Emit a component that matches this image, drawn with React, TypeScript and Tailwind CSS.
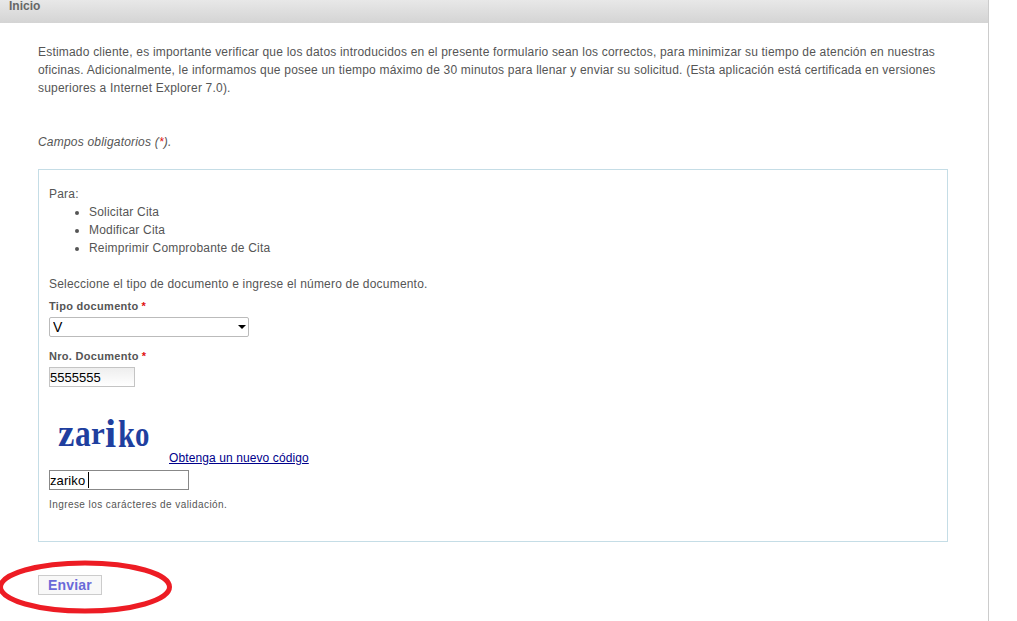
import { ChangeEvent, useState } from 'react';

function Required() {
  return <span className="text-[#e01010] ml-[3px]">*</span>;
}

function Captcha() {
  return (
    <div className="w-[120px] h-[55px] flex items-end pl-[9px] pb-[16px] text-[#1f3f9f] font-bold leading-[30px] font-['Liberation_Serif',serif]">
      <span className="text-[37px] w-[17px]">z</span>
      <span className="text-[37px] w-[16px] origin-left scale-x-[0.85]">a</span>
      <span className="text-[31px] w-[14px]">r</span>
      <span className="text-[40px] w-[13px]">i</span>
      <span className="text-[38px] w-[17px] origin-left scale-x-[0.8]">k</span>
      <span className="text-[36px] w-[15px] origin-left scale-x-[0.8]">o</span>
    </div>
  );
}

export default function App() {
  const [tipo, setTipo] = useState('V');
  const [documento, setDocumento] = useState('5555555');
  const [codigo, setCodigo] = useState('zariko');

  return (
    <div className="relative w-[1017px] h-[621px] overflow-hidden bg-white font-['Liberation_Sans',Arial,sans-serif] text-[12px] leading-[18px] tracking-[0.2px] text-[#555]">
      <div className="w-[989px] h-full border-r border-[#ccc]">
        <div className="h-[23px] px-[9px] bg-gradient-to-b from-[#e8e8e8] to-[#d4d4d4] font-bold text-[#666] leading-[13px] tracking-normal">
          Inicio
        </div>

        <div className="pl-[38px] pr-[40px] pt-[20px]">
          <p>
            Estimado cliente, es importante verificar que los datos introducidos en el presente formulario sean los correctos, para minimizar su tiempo de atención en nuestras oficinas. Adicionalmente, le informamos que posee un tiempo máximo de 30 minutos para llenar y enviar su solicitud. (Esta aplicación está certificada en versiones superiores a Internet Explorer 7.0).
          </p>

          <p className="mt-[36px] italic">
            Campos obligatorios (<span className="text-[#e01010]">*</span>).
          </p>

          <div className="mt-[18px] h-[373px] w-[910px] border border-[#c5dde6] pt-[15px] px-[10px]">
            <p>Para:</p>
            <ul className="list-disc pl-[40px]">
              <li>Solicitar Cita</li>
              <li>Modificar Cita</li>
              <li>Reimprimir Comprobante de Cita</li>
            </ul>

            <p className="mt-[18px]">Seleccione el tipo de documento e ingrese el número de documento.</p>

            <form onSubmit={(e) => e.preventDefault()}>
              <label htmlFor="tipo" className="block mt-[4px] text-[11px] font-bold tracking-[0.3px]">
                Tipo documento
                <Required />
              </label>
              <div className="relative mt-[2px] w-[200px]">
                <select
                  id="tipo"
                  value={tipo}
                  onChange={(e: ChangeEvent<HTMLSelectElement>) => setTipo(e.target.value)}
                  className="block w-[200px] h-[20px] pl-[3px] appearance-none bg-white border border-[#bbb] rounded-[2px] text-[14px] tracking-normal text-black"
                >
                  <option>V</option>
                  <option>E</option>
                  <option>P</option>
                </select>
                <span className="absolute right-[3px] top-[8px] border-x-[4px] border-t-[4px] border-x-transparent border-t-black" />
              </div>

              <label htmlFor="documento" className="block mt-[10px] text-[11px] font-bold tracking-[0.3px]">
                Nro. Documento
                <Required />
              </label>
              <input
                id="documento"
                type="text"
                value={documento}
                onChange={(e) => setDocumento(e.target.value)}
                className="block mt-[2px] w-[86px] h-[20px] px-0 bg-gradient-to-b from-[#eee] to-white border border-[#c4c4c4] text-[13px] tracking-normal text-black outline-none"
              />

              <div className="flex items-end mt-[23px]">
                <Captcha />
                <a href="#" className="text-[12px] leading-[14px] tracking-[0.1px] text-[#00008b] underline">
                  Obtenga un nuevo código
                </a>
              </div>

              <div className="relative mt-[5px] w-[140px]">
                <input
                  id="codigo"
                  type="text"
                  value={codigo}
                  onChange={(e) => setCodigo(e.target.value)}
                  className="block w-[140px] h-[20px] px-0 bg-white border border-[#888] text-[13px] tracking-[0.1px] text-black outline-none"
                />
                <span className="absolute left-[39px] top-[2px] h-[16px] w-px bg-black" />
              </div>

              <p className="mt-[6px] text-[10px] leading-[18px] tracking-[0.43px]">Ingrese los carácteres de validación.</p>
            </form>
          </div>

          <button className="block mt-[33px] w-[64px] h-[20px] bg-[#f8f8f8] border border-[#ccc] text-[14px] leading-none font-bold tracking-[0.2px] text-[#6a6ad8]">
            Enviar
          </button>
        </div>
      </div>

      <svg className="absolute left-0 top-[555px]" width="180" height="66" viewBox="0 0 180 66" fill="none">
        <ellipse cx="85" cy="32" rx="84.5" ry="24" stroke="#ed1c24" strokeWidth="5" />
      </svg>
    </div>
  );
}
